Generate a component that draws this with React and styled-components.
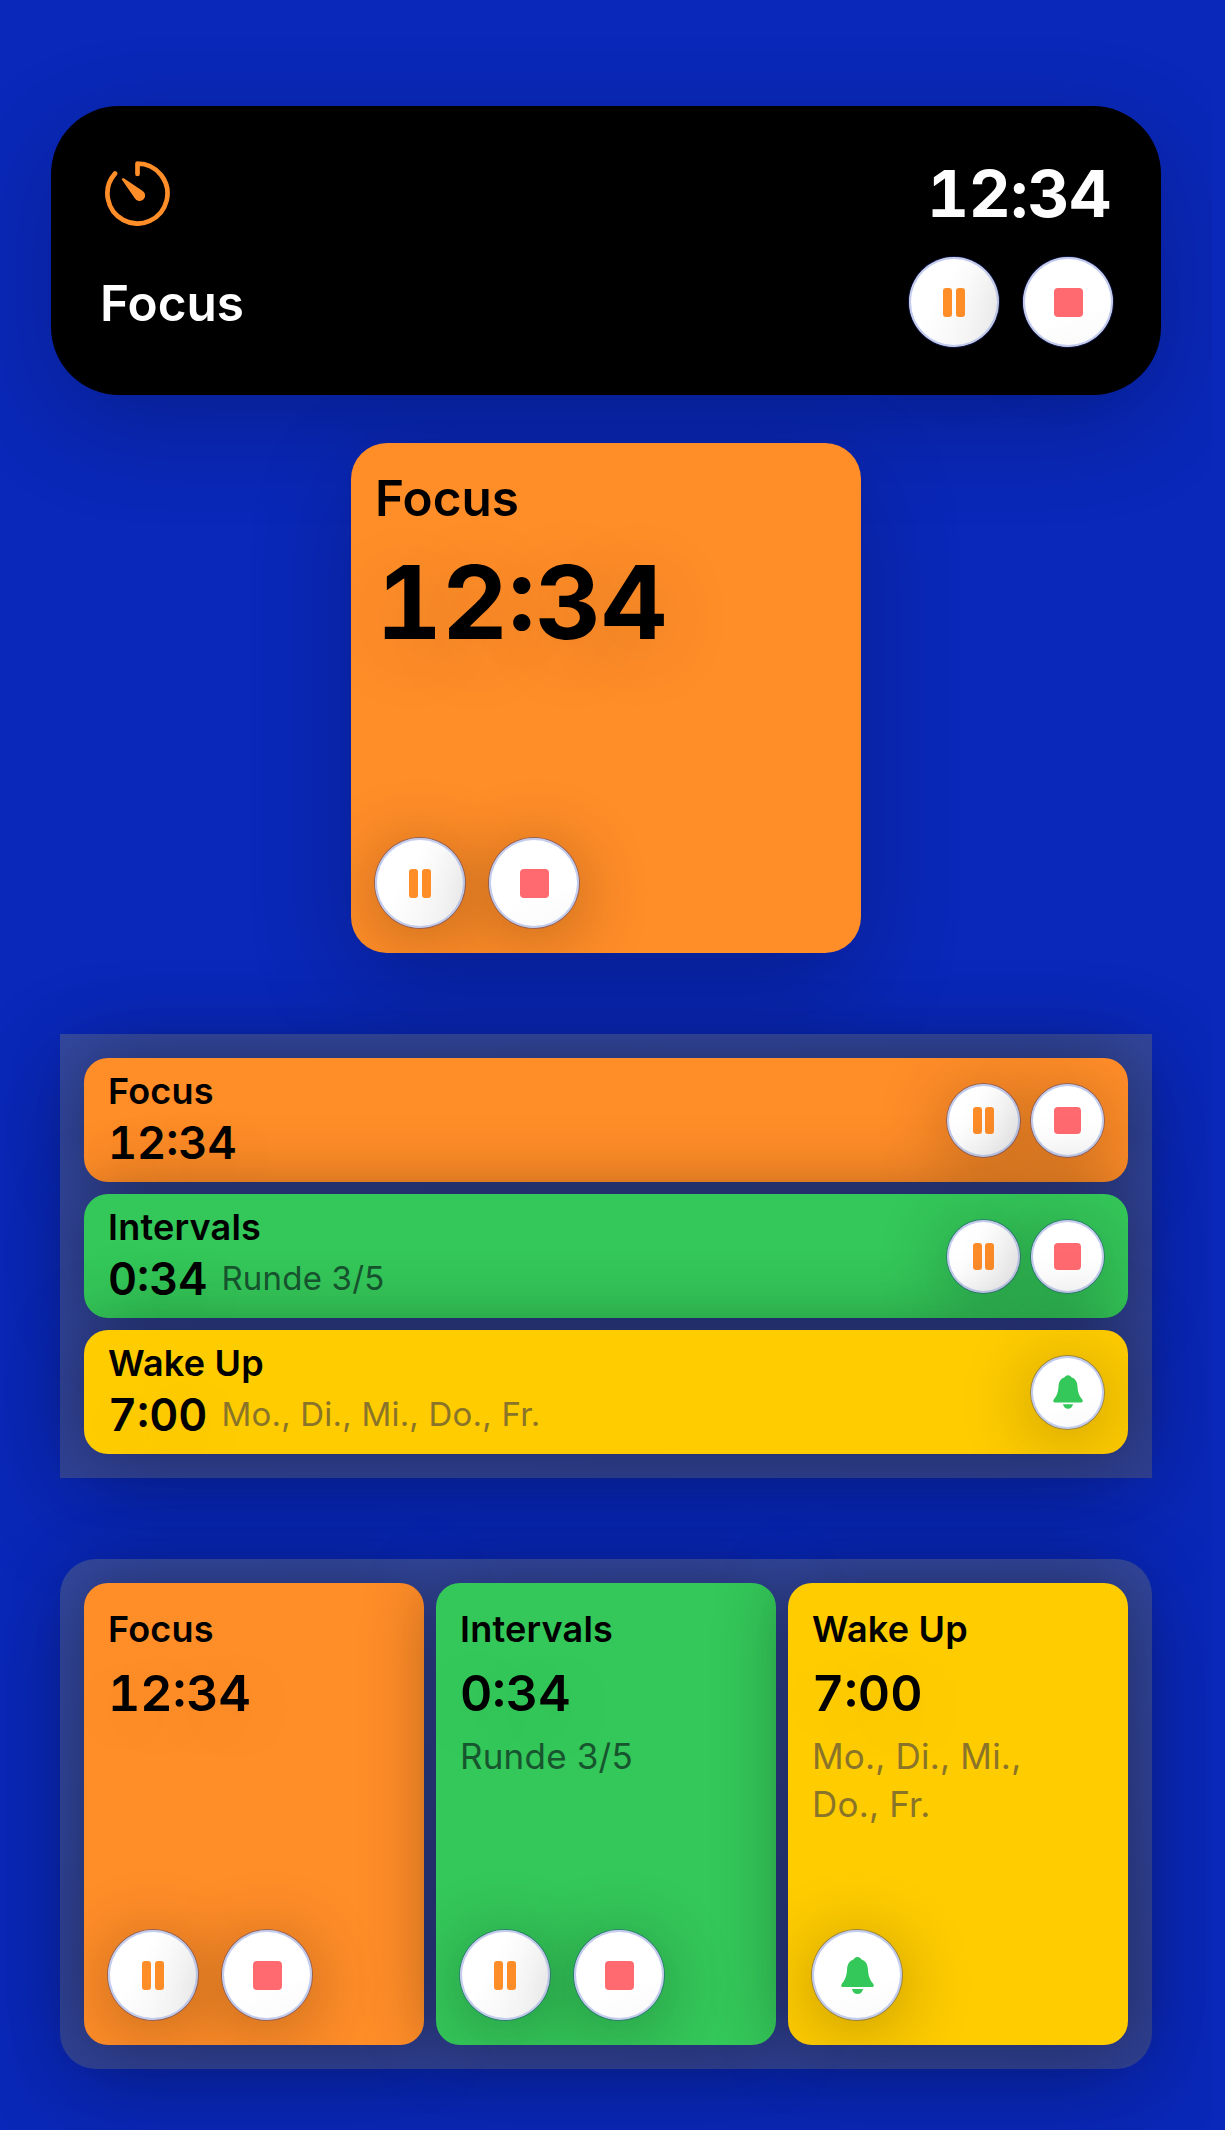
import React from 'react';
import styled, { createGlobalStyle } from 'styled-components';

const ORANGE = '#ff8d28';
const GREEN = '#34c759';
const YELLOW = '#ffcc00';
const RED = '#ff6a70';

const SUB_COLORS = {
  green: '#17552f',
  yellow: '#8a7429',
};

const GlobalStyle = createGlobalStyle`
  html, body {
    margin: 0;
    padding: 0;
    background: #0a28b9;
  }
  * {
    box-sizing: border-box;
  }
`;

const Page = styled.div`
  width: 1212px;
  height: 2130px;
  padding-top: 106px;
  display: flex;
  flex-direction: column;
  align-items: center;
  font-family: Inter, 'Noto Sans', sans-serif;
  color: #000;
  overflow: hidden;
`;

const Island = styled.section`
  width: 1110px;
  height: 289px;
  padding: 48px 47px 48px 48px;
  background: #000;
  border-radius: 68px;
  color: #fff;
  display: flex;
  flex-direction: column;
  gap: 23px;
  box-shadow: 0 30px 100px rgba(0, 0, 0, 0.22);
`;

const IslandRow = styled.div`
  display: flex;
  align-items: center;
  justify-content: space-between;
  height: ${(props) => props.$height}px;
`;

const TimerIcon = styled.svg`
  width: 65px;
  height: 65px;
  margin-left: 6px;
  margin-top: -1px;
`;

const Label = styled.div`
  font-size: ${(props) => props.$size}px;
  font-weight: 560;
  letter-spacing: ${(props) => props.$spacing || 0}px;
  line-height: 1.2;
  white-space: nowrap;
`;

const IslandLabel = styled(Label)`
  margin-top: 3px;
  margin-left: 1px;
`;

const SquareLabel = styled(Label)`
  margin-top: 2px;
`;

const Clock = styled.div`
  font-size: ${(props) => props.$size}px;
  font-weight: ${(props) => props.$weight || 600};
  line-height: 1.2;
  font-variant-numeric: tabular-nums;
  white-space: nowrap;
  letter-spacing: ${(props) => props.$spacing || 0}px;
  text-shadow: 0 12px 80px rgba(0, 0, 0, 0.16);
`;

const IslandClock = styled(Clock)`
  margin-right: 3px;
`;

const Sub = styled.div`
  font-size: ${(props) => props.$size}px;
  font-weight: 400;
  line-height: 48px;
  letter-spacing: 0.2px;
  color: ${(props) => SUB_COLORS[props.$tone]};
`;

const Controls = styled.div`
  display: flex;
  align-items: center;
  gap: ${(props) => props.$gap}px;
`;

const Round = styled.div`
  width: ${(props) => props.$size}px;
  height: ${(props) => props.$size}px;
  flex: none;
  border-radius: 50%;
  display: flex;
  align-items: center;
  justify-content: center;
  border: 1px solid rgba(30, 45, 130, 0.45);
  background: ${(props) =>
      props.$soft
        ? 'linear-gradient(120deg, #fff 35%, #efefef 100%)'
        : 'linear-gradient(160deg, #fff 60%, #f9f9f9 100%)'}
    padding-box;
  box-shadow:
    inset 0 0 0 2px #c3ccec,
    0 10px 70px rgba(0, 0, 0, 0.28);
`;

const PauseBars = styled.div`
  display: flex;
  gap: ${(props) => (props.$small ? 3 : 4)}px;
`;

const PauseBar = styled.div`
  width: 9px;
  height: ${(props) => (props.$small ? 27 : 29)}px;
  background: ${ORANGE};
  border-radius: 3px;
`;

const StopMark = styled.div`
  width: ${(props) => (props.$small ? 27 : 29)}px;
  height: ${(props) => (props.$small ? 27 : 29)}px;
  background: ${RED};
  border-radius: 4px;
`;

const BellIcon = styled.svg`
  width: ${(props) => (props.$small ? 30 : 33)}px;
  height: ${(props) => (props.$small ? 34 : 37)}px;
  fill: ${GREEN};
`;

const Square = styled.section`
  width: 510px;
  height: 510px;
  margin-top: 48px;
  padding: 24px;
  background: ${ORANGE};
  border-radius: 36px;
  overflow: hidden;
  display: flex;
  flex-direction: column;
  box-shadow: 0 30px 100px rgba(0, 0, 0, 0.24);
`;

const BigClock = styled(Clock)`
  margin-top: 13px;
  margin-left: 1px;
`;

const BottomControls = styled(Controls)`
  margin-top: auto;
  margin-left: -1px;
`;

const ListPanel = styled.section`
  width: 1092px;
  height: 444px;
  margin-top: 81px;
  padding: 24px;
  background: linear-gradient(170deg, #33489f, #2f3f90);
  display: flex;
  flex-direction: column;
  gap: 12px;
  box-shadow: 0 30px 100px rgba(0, 0, 0, 0.2);
`;

const Row = styled.div`
  height: 124px;
  padding: 0 23px 0 24px;
  background: ${(props) => props.$color};
  border-radius: 24px;
  overflow: hidden;
  display: flex;
  align-items: center;
  justify-content: space-between;
  box-shadow: 0 0 70px rgba(0, 0, 0, 0.36);
`;

const RowText = styled.div`
  display: flex;
  flex-direction: column;
`;

const RowTime = styled.div`
  display: flex;
  align-items: center;
  gap: 14px;
  margin-top: 2px;
`;

const RowSub = styled(Sub)`
  line-height: 1;
`;

const GridPanel = styled.section`
  width: 1092px;
  height: 510px;
  margin-top: 81px;
  padding: 24px;
  background: linear-gradient(170deg, #33489f, #2f3f90);
  border-radius: 36px;
  display: grid;
  grid-template-columns: repeat(3, 340px);
  gap: 12px;
  box-shadow: 0 30px 100px rgba(0, 0, 0, 0.2);
`;

const Tile = styled.div`
  padding: 25px 23px 24px 24px;
  background: ${(props) => props.$color};
  border-radius: 24px;
  overflow: hidden;
  display: flex;
  flex-direction: column;
  box-shadow: 0 0 70px rgba(0, 0, 0, 0.36);
`;

const TileClock = styled(Clock)`
  margin-top: 12px;
`;

const TileSub = styled(Sub)`
  margin-top: 9px;
  padding-right: 20px;
`;

const Timer = () => (
  <TimerIcon viewBox='0 0 65 65' fill='none'>
    <path
      d='M32.5 13V2.5A30 30 0 1 1 10 12.6'
      stroke={ORANGE}
      strokeWidth='4.7'
      strokeLinecap='round'
      strokeLinejoin='round'
    />
    <path
      d='M16.8 18.6Q17 16.6 19.2 17.4L37 29.4A5.6 5.6 0 1 1 29.6 37Z'
      fill={ORANGE}
    />
  </TimerIcon>
);

const Bell = ({ small }) => (
  <BellIcon $small={small} viewBox='0 0 33 37'>
    <path d='M16.5 0C18.6 0 19.6 1 20.6 2.6C25 4 26.6 8 26.9 12C27.3 18 28.2 22 32 26.6C33.4 28.4 32.6 30 31 30H2C0.4 30 -0.4 28.4 1 26.6C4.8 22 5.7 18 6.1 12C6.4 8 8 4 12.4 2.6C13.4 1 14.4 0 16.5 0Z' />
    <path d='M11 32H22C21.6 35 19.2 37 16.5 37C13.8 37 11.4 35 11 32Z' />
  </BellIcon>
);

const PauseButton = ({ size, small }) => (
  <Round $size={size} $soft>
    <PauseBars $small={small}>
      <PauseBar $small={small} />
      <PauseBar $small={small} />
    </PauseBars>
  </Round>
);

const StopButton = ({ size, small }) => (
  <Round $size={size}>
    <StopMark $small={small} />
  </Round>
);

const BellButton = ({ size, small }) => (
  <Round $size={size}>
    <Bell small={small} />
  </Round>
);

const ROWS = [
  { name: 'Focus', time: '12:34', color: ORANGE },
  { name: 'Intervals', time: '0:34', color: GREEN, sub: 'Runde 3/5', tone: 'green' },
  { name: 'Wake Up', time: '7:00', color: YELLOW, sub: 'Mo., Di., Mi., Do., Fr.', tone: 'yellow', alarm: true },
];

const App = () => {
  return (
    <Page>
      <GlobalStyle />
      <Island>
        <IslandRow $height={80}>
          <Timer />
          <IslandClock $size={65} $spacing={-0.3} $weight={650}>
            12:34
          </IslandClock>
        </IslandRow>
        <IslandRow $height={90}>
          <IslandLabel $size={49.5}>Focus</IslandLabel>
          <Controls $gap={22}>
            <PauseButton size={92} />
            <StopButton size={92} />
          </Controls>
        </IslandRow>
      </Island>

      <Square>
        <SquareLabel $size={49.5}>Focus</SquareLabel>
        <BigClock $size={102} $weight={650}>
          12:34
        </BigClock>
        <BottomControls $gap={22}>
          <PauseButton size={92} />
          <StopButton size={92} />
        </BottomControls>
      </Square>

      <ListPanel>
        {ROWS.map((item) => (
          <Row key={item.name} $color={item.color}>
            <RowText>
              <Label $size={36} $spacing={0.2}>
                {item.name}
              </Label>
              <RowTime>
                <Clock $size={45} $weight={570}>
                  {item.time}
                </Clock>
                {item.sub && (
                  <RowSub $size={33} $tone={item.tone}>
                    {item.sub}
                  </RowSub>
                )}
              </RowTime>
            </RowText>
            <Controls $gap={9}>
              {item.alarm ? (
                <BellButton size={75} small />
              ) : (
                <>
                  <PauseButton size={75} small />
                  <StopButton size={75} small />
                </>
              )}
            </Controls>
          </Row>
        ))}
      </ListPanel>

      <GridPanel>
        {ROWS.map((item) => (
          <Tile key={item.name} $color={item.color}>
            <Label $size={36} $spacing={0.2}>
              {item.name}
            </Label>
            <TileClock $size={50} $weight={570}>
              {item.time}
            </TileClock>
            {item.sub && (
              <TileSub $size={35} $tone={item.tone}>
                {item.sub}
              </TileSub>
            )}
            <BottomControls $gap={22}>
              {item.alarm ? (
                <BellButton size={92} />
              ) : (
                <>
                  <PauseButton size={92} />
                  <StopButton size={92} />
                </>
              )}
            </BottomControls>
          </Tile>
        ))}
      </GridPanel>
    </Page>
  );
};

export default App;
